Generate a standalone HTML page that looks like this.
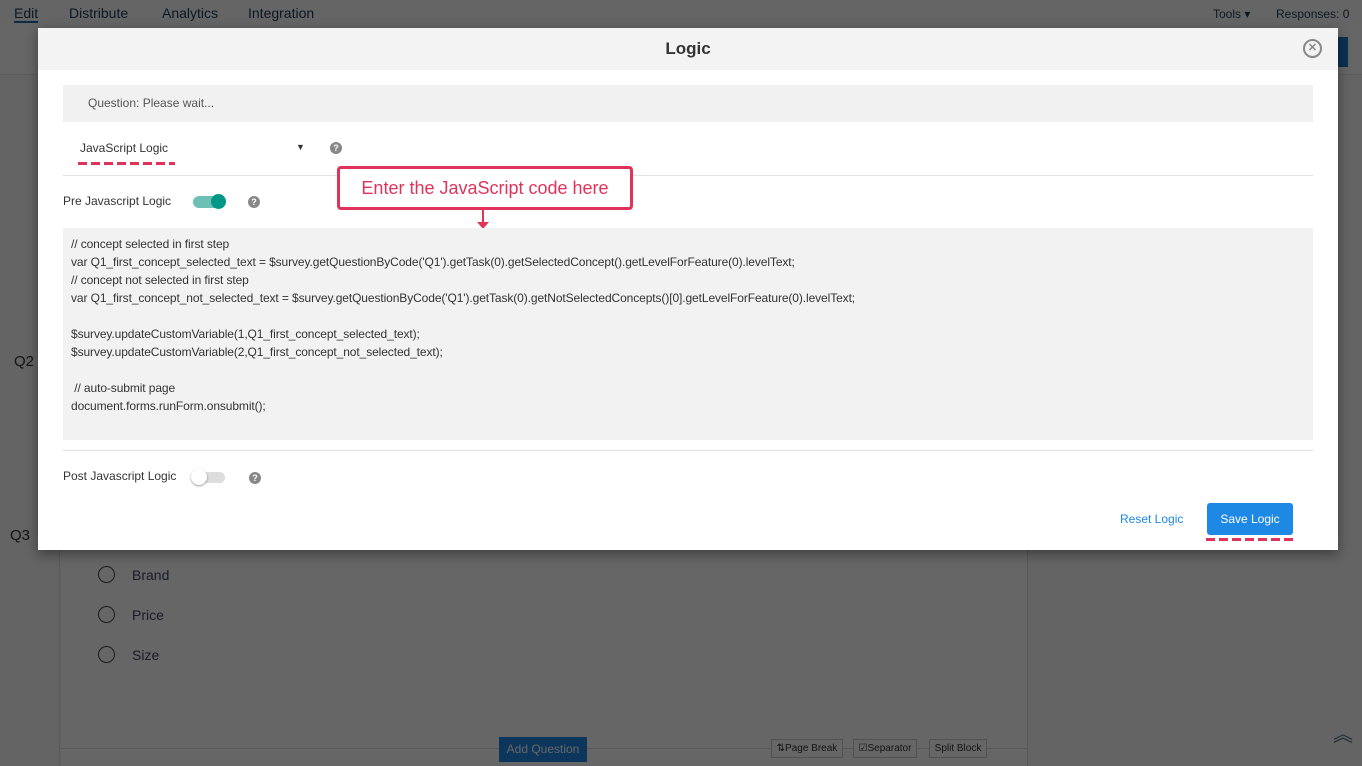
<!DOCTYPE html>
<html><head><meta charset="utf-8"><style>
*{box-sizing:border-box;margin:0;padding:0}
html,body{background:#fafafa}
body{width:1362px;height:766px;overflow:hidden;font-family:"Liberation Sans",sans-serif;position:relative;font-size:13px}
.abs{position:absolute}
.top{left:0;top:0;width:1362px;height:28px;background-color:#fdfdfd}
.nav{top:5px;font-size:14px;color:#1a3c5a}
.sub{left:0;top:28px;width:1362px;height:47px;background-color:#fff;border-bottom:1px solid #e6e6e6}
.overlay{left:0;top:0;width:1362px;height:766px;background:rgba(0,0,0,0.6)}
.modal{left:38px;top:28px;width:1300px;height:522px;background:#fff;box-shadow:0 4px 12px rgba(0,0,0,.4)}
.hdr{left:0;top:0;width:1300px;height:42px;background:#f3f3f3;text-align:center;line-height:42px;font-size:17px;font-weight:bold;color:#333}
.q{left:25px;top:57px;width:1250px;height:37px;background:#f1f1f1;color:#555;font-size:12px;line-height:37px;padding-left:25px}
.help{width:12px;height:12px;border-radius:50%;background:#888;color:#fff;font-size:9px;font-weight:bold;text-align:center;line-height:12px}
.code{left:25px;top:200px;width:1250px;height:212px;background:#f2f2f2;padding:7px 8px;font-size:12px;line-height:18px;color:#333;white-space:pre;letter-spacing:-0.1px}
.dash{height:3px;background:repeating-linear-gradient(90deg,#e0335a 0 9px,transparent 9px 13px)}
</style></head><body>
<div class="abs top"></div>
<div class="abs nav" style="left:14px;border-bottom:2px solid #1b6fb2">Edit</div>
<div class="abs nav" style="left:69px">Distribute</div>
<div class="abs nav" style="left:162px">Analytics</div>
<div class="abs nav" style="left:248px">Integration</div>
<div class="abs nav" style="left:1213px;font-size:12px;top:7px">Tools ▾</div>
<div class="abs nav" style="left:1276px;font-size:12px;top:7px">Responses: 0</div>
<div class="abs sub"></div>
<div class="abs" style="left:1338px;top:37px;width:10px;height:30px;background:#1e7bd0"></div>
<div class="abs" style="left:14px;top:353px;font-size:15px;color:#333">Q2</div>
<div class="abs" style="left:10px;top:527px;font-size:15px;color:#333">Q3</div>
<div class="abs" style="left:59px;top:550px;width:969px;height:216px;background:#fff;border-left:1px solid #ddd;border-right:1px solid #ddd"></div>
<div class="abs" style="left:59px;top:748px;width:969px;height:1px;background:#ddd"></div>
<div class="abs" style="left:98px;top:566px;width:17px;height:17px;border:1px solid #444;border-radius:50%"></div>
<div class="abs" style="left:132px;top:567px;font-size:14px;color:#3a4a66">Brand</div>
<div class="abs" style="left:98px;top:606px;width:17px;height:17px;border:1px solid #444;border-radius:50%"></div>
<div class="abs" style="left:132px;top:607px;font-size:14px;color:#3a4a66">Price</div>
<div class="abs" style="left:98px;top:646px;width:17px;height:17px;border:1px solid #444;border-radius:50%"></div>
<div class="abs" style="left:132px;top:647px;font-size:14px;color:#3a4a66">Size</div>
<div class="abs" style="left:499px;top:737px;width:88px;height:25px;background:#1e88e5;color:#fff;font-size:12px;text-align:center;line-height:24px">Add Question</div>
<div class="abs" style="left:771px;top:739px;width:72px;height:19px;border:1px solid #ccc;background:#fff;font-size:10px;line-height:18px;text-align:center;color:#333">⇅Page Break</div>
<div class="abs" style="left:853px;top:739px;width:64px;height:19px;border:1px solid #ccc;background:#fff;font-size:10px;line-height:18px;text-align:center;color:#333">☑Separator</div>
<div class="abs" style="left:929px;top:739px;width:58px;height:19px;border:1px solid #ccc;background:#fff;font-size:10px;line-height:18px;text-align:center;color:#333">Split Block</div>
<div class="abs" style="left:1333px;top:718px;font-size:20px;color:#4a6e95">︽</div>
<div class="abs overlay"></div>

<div class="abs modal">
<div class="abs hdr">Logic</div>
<div class="abs" style="left:1265px;top:11px;width:19px;height:19px;border:2px solid #888;border-radius:50%;color:#888;font-size:11px;text-align:center;line-height:15px;font-weight:bold">✕</div>
<div class="abs q">Question: Please wait...</div>
<div class="abs" style="left:42px;top:113px;font-size:12px;color:#333">JavaScript Logic</div>
<div class="abs" style="left:258px;top:114px;font-size:9px;color:#333">▼</div>
<div class="abs dash" style="left:40px;top:134px;width:97px"></div>
<div class="abs help" style="left:292px;top:114px">?</div>
<div class="abs" style="left:25px;top:147px;width:1250px;height:1px;background:#e3e3e3"></div>
<div class="abs" style="left:25px;top:166px;font-size:12px;color:#333">Pre Javascript Logic</div>
<div class="abs" style="left:155px;top:168px;width:32px;height:12px;border-radius:6px;background:#6ec0b6"></div>
<div class="abs" style="left:173px;top:166px;width:15px;height:15px;border-radius:50%;background:#009688"></div>
<div class="abs help" style="left:210px;top:168px">?</div>
<div class="abs" style="left:299px;top:138px;width:296px;height:44px;border:3px solid #e0335a;border-radius:4px;background:#fff;color:#e0335a;font-size:18px;line-height:38px;text-align:center">Enter the JavaScript code here</div>
<div class="abs" style="left:444px;top:182px;width:2px;height:14px;background:#e0335a"></div>
<div class="abs" style="left:439px;top:194px;width:0;height:0;border-left:6px solid transparent;border-right:6px solid transparent;border-top:7px solid #e0335a"></div>
<div class="abs code">// concept selected in first step
var Q1_first_concept_selected_text = $survey.getQuestionByCode('Q1').getTask(0).getSelectedConcept().getLevelForFeature(0).levelText;
// concept not selected in first step
var Q1_first_concept_not_selected_text = $survey.getQuestionByCode('Q1').getTask(0).getNotSelectedConcepts()[0].getLevelForFeature(0).levelText;

$survey.updateCustomVariable(1,Q1_first_concept_selected_text);
$survey.updateCustomVariable(2,Q1_first_concept_not_selected_text);

 // auto-submit page
document.forms.runForm.onsubmit();</div>
<div class="abs" style="left:25px;top:422px;width:1250px;height:1px;background:#e3e3e3"></div>
<div class="abs" style="left:25px;top:441px;font-size:12px;color:#333">Post Javascript Logic</div>
<div class="abs" style="left:155px;top:444px;width:32px;height:11px;border-radius:6px;background:#ddd"></div>
<div class="abs" style="left:153px;top:441px;width:16px;height:16px;border-radius:50%;background:#fff;box-shadow:0 1px 2px rgba(0,0,0,.4)"></div>
<div class="abs help" style="left:211px;top:444px">?</div>
<div class="abs" style="left:1082px;top:484px;font-size:12px;color:#1e88e5">Reset Logic</div>
<div class="abs" style="left:1169px;top:475px;width:86px;height:32px;background:#1e88e5;border-radius:3px;color:#fff;font-size:12px;text-align:center;line-height:32px">Save Logic</div>
<div class="abs dash" style="left:1168px;top:510px;width:88px"></div>
</div>
</body></html>
